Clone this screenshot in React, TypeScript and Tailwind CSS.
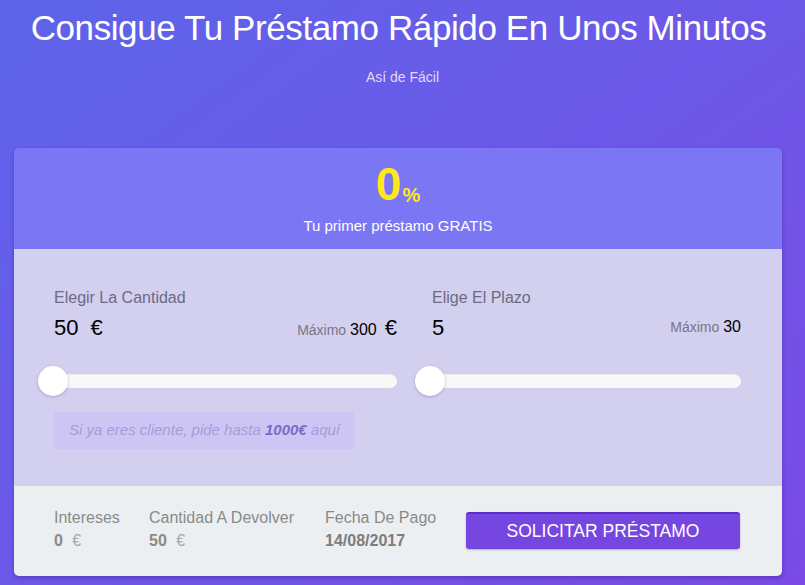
import React, { useState } from 'react';

const font = { fontFamily: '"Liberation Sans", Arial, sans-serif' };

type SliderProps = { value: number; min: number; max: number };

const Slider: React.FC<SliderProps> = ({ value, min, max }) => {
  const pct = ((value - min) / (max - min)) * 100;
  return (
    <div className="relative h-[30px] flex items-center">
      <div className="w-full h-[14px] rounded-full bg-[#f8f8f8] shadow-[inset_0_1px_1px_rgba(0,0,0,0.05)]" />
      <div
        className="absolute top-0 w-[30px] h-[30px] rounded-full bg-white shadow-[0_1px_3px_rgba(80,70,150,0.35)]"
        style={{ left: `calc(${pct}% - ${pct * 0.3}px)` }}
      />
    </div>
  );
};

const App: React.FC = () => {
  const [amount] = useState(50);
  const [term] = useState(5);

  return (
    <div
      className="w-full h-[585px] overflow-hidden bg-gradient-to-br from-[#5c64ea] to-[#7a4ae6] text-white"
      style={font}
    >
      <h1 className="pt-[8px] pr-[8px] text-center text-[35px] leading-[40px] tracking-[-0.4px]">
        Consigue Tu Préstamo Rápido En Unos Minutos
      </h1>
      <p className="mt-[21px] text-center text-[14px] leading-[16px] text-[#e6d6f6]">Así de Fácil</p>

      <div className="ml-[14px] mt-[63px] w-[768px] rounded-[5px] overflow-hidden shadow-[0_2px_4px_rgba(40,20,120,0.35)]">
        {/* top banner */}
        <div className="h-[101px] bg-[#7a76f4] flex flex-col items-center">
          <div className="mt-[12px] flex items-end text-[#ffe81a] font-bold">
            <span className="text-[46px] leading-[48px]">0</span>
            <span className="text-[20px] leading-[25px] ml-[1px]">%</span>
          </div>
          <p className="mt-[10px] text-[15px] leading-[16px] text-white">Tu primer préstamo GRATIS</p>
        </div>

        {/* sliders */}
        <div className="h-[237px] bg-[#d3d0ef] pt-[40px] text-[#222]">
          <div className="flex">
            <div className="ml-[24px] w-[359px]">
              <div className="pl-[16px] text-[16px] leading-[17px] text-[#6c6a84]">Elegir La Cantidad</div>
              <div className="pl-[16px] mt-[8px] flex items-center justify-between h-[26px]">
                <span className="text-[22px] text-black">
                  {amount}
                  <span className="ml-[12px]">€</span>
                </span>
                <span className="text-[14px] text-[#77758a]">
                  Máximo <span className="text-[16px] text-black">300</span>
                  <span className="ml-[8px] text-[22px] text-black">€</span>
                </span>
              </div>
              <div className="mt-[26px]">
                <Slider value={amount} min={50} max={300} />
              </div>
              <div className="ml-[16px] mt-[16px] w-[300px] h-[37px] rounded-[4px] bg-[#cdc6f4] flex items-center pl-[15px] text-[15px] italic text-[#a59cdb]">
                Si ya eres cliente, pide hasta&nbsp;<b className="text-[#7a6cc6]">1000€</b>&nbsp;aquí
              </div>
            </div>

            <div className="ml-[18px] w-[326px]">
              <div className="pl-[17px] text-[16px] leading-[17px] text-[#6c6a84]">Elige El Plazo</div>
              <div className="pl-[17px] mt-[8px] flex items-center justify-between h-[26px]">
                <span className="text-[22px] text-black">{term}</span>
                <span className="text-[14px] text-[#77758a]">
                  Máximo <span className="text-[16px] text-black">30</span>
                </span>
              </div>
              <div className="mt-[26px]">
                <Slider value={term} min={5} max={30} />
              </div>
            </div>
          </div>
        </div>

        {/* summary */}
        <div className="h-[90px] bg-[#eceff1] flex items-start pt-[23px] pl-[40px]">
          <div className="w-[95px]">
            <div className="text-[16px] leading-[18px] text-[#8a8a8a]">Intereses</div>
            <div className="mt-[5px] text-[16px] leading-[18px] font-bold text-[#8a8a8a]">
              0 <span className="ml-[5px] font-normal text-[#a8a8a8]">€</span>
            </div>
          </div>
          <div className="w-[176px]">
            <div className="text-[16px] leading-[18px] text-[#8a8a8a]">Cantidad A Devolver</div>
            <div className="mt-[5px] text-[16px] leading-[18px] font-bold text-[#8a8a8a]">
              50 <span className="ml-[5px] font-normal text-[#a8a8a8]">€</span>
            </div>
          </div>
          <div className="w-[141px]">
            <div className="text-[16px] leading-[18px] text-[#8a8a8a]">Fecha De Pago</div>
            <div className="mt-[5px] text-[16px] leading-[18px] font-bold text-[#7d7d7d]">14/08/2017</div>
          </div>
          <button className="mt-[3px] w-[274px] h-[37px] rounded-[3px] bg-[#7546e0] border-t-2 border-[#5a2ec6] text-white text-[17.5px] shadow-[0_1px_2px_rgba(0,0,0,0.25)]">
            SOLICITAR PRÉSTAMO
          </button>
        </div>
      </div>
    </div>
  );
};

export default App;
